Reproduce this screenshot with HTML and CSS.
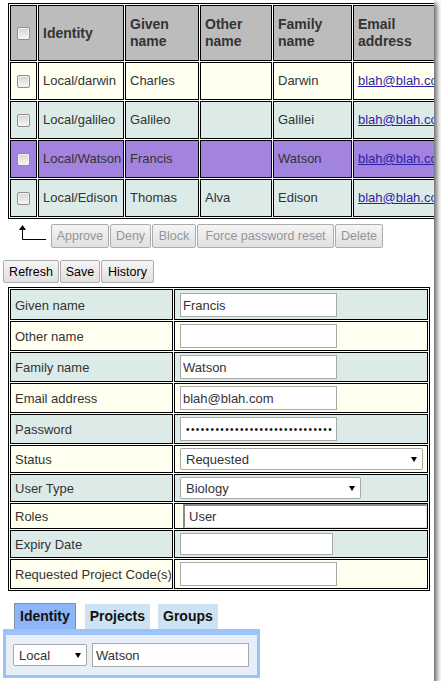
FILE: index.html
```html
<!DOCTYPE html>
<html>
<head>
<meta charset="utf-8">
<link rel="stylesheet" href="styles.css">
</head>
<body>
<div class="window">
  <table class="grid">
    <thead>
      <tr>
        <th class="c-chk"><input type="checkbox" class="chk"></th>
        <th class="c-id">Identity</th>
        <th class="c-given">Given name</th>
        <th class="c-other">Other name</th>
        <th class="c-family">Family name</th>
        <th class="c-email">Email address</th>
      </tr>
    </thead>
    <tbody>
      <tr class="ivory">
        <td><input type="checkbox" class="chk"></td>
        <td>Local/darwin</td><td>Charles</td><td></td><td>Darwin</td>
        <td><a href="#">blah@blah.com</a></td>
      </tr>
      <tr class="teal">
        <td><input type="checkbox" class="chk"></td>
        <td>Local/galileo</td><td>Galileo</td><td></td><td>Galilei</td>
        <td><a href="#">blah@blah.com</a></td>
      </tr>
      <tr class="selected">
        <td><input type="checkbox" class="chk"></td>
        <td>Local/Watson</td><td>Francis</td><td></td><td>Watson</td>
        <td><a href="#">blah@blah.com</a></td>
      </tr>
      <tr class="teal">
        <td><input type="checkbox" class="chk"></td>
        <td>Local/Edison</td><td>Thomas</td><td>Alva</td><td>Edison</td>
        <td><a href="#">blah@blah.com</a></td>
      </tr>
    </tbody>
  </table>

  <div class="actions">
    <svg class="sel-arrow" width="30" height="17" viewBox="0 0 30 17">
      <path d="M5.5 4 V15.5 H29" fill="none" stroke="#000" stroke-width="1"/>
      <path d="M2 6 L5.5 1 L9 6 Z" fill="#000"/>
    </svg>
    <button class="btn act w-approve" disabled>Approve</button>
    <button class="btn act w-deny" disabled>Deny</button>
    <button class="btn act w-block" disabled>Block</button>
    <button class="btn act w-force" disabled>Force password reset</button>
    <button class="btn act w-delete" disabled>Delete</button>
  </div>

  <div class="toolbar">
    <button class="btn tool w-refresh">Refresh</button>
    <button class="btn tool w-save">Save</button>
    <button class="btn tool w-history">History</button>
  </div>

  <table class="form">
    <tr class="teal first">
      <td class="lbl">Given name</td>
      <td class="val"><input class="txt w157" type="text" value="Francis"></td>
    </tr>
    <tr class="ivory">
      <td class="lbl">Other name</td>
      <td class="val"><input class="txt w157" type="text" value=""></td>
    </tr>
    <tr class="teal">
      <td class="lbl">Family name</td>
      <td class="val"><input class="txt w157" type="text" value="Watson"></td>
    </tr>
    <tr class="ivory">
      <td class="lbl">Email address</td>
      <td class="val"><input class="txt w157" type="text" value="blah@blah.com"></td>
    </tr>
    <tr class="teal">
      <td class="lbl">Password</td>
      <td class="val"><input class="txt w157 pw" type="password" value="aaaaaaaaaaaaaaaaaaaaaaaaaaaaaa"></td>
    </tr>
    <tr class="ivory">
      <td class="lbl">Status</td>
      <td class="val"><span class="selwrap w243"><select class="sel"><option>Requested</option></select></span></td>
    </tr>
    <tr class="teal">
      <td class="lbl">User Type</td>
      <td class="val"><span class="selwrap w181"><select class="sel"><option>Biology</option></select></span></td>
    </tr>
    <tr class="ivory">
      <td class="lbl">Roles</td>
      <td class="val roles"><input class="roles-in" type="text" value="User"></td>
    </tr>
    <tr class="teal">
      <td class="lbl">Expiry Date</td>
      <td class="val"><input class="txt w153 short" type="text" value=""></td>
    </tr>
    <tr class="ivory">
      <td class="lbl">Requested Project Code(s)</td>
      <td class="val"><input class="txt w157" type="text" value=""></td>
    </tr>
  </table>

  <div class="tabs">
    <div class="tab active">Identity</div>
    <div class="tab">Projects</div>
    <div class="tab">Groups</div>
  </div>
  <div class="panel">
    <span class="selwrap w74"><select class="sel"><option>Local</option></select></span>
    <input class="txt w157 watson" type="text" value="Watson">
  </div>
</div>
</body>
</html>
```
FILE: styles.css
```css
html, body {
  margin: 0;
  padding: 0;
  background: #ffffff;
}
body {
  font-family: "Liberation Sans", Arial, sans-serif;
  font-size: 13px;
  color: #333;
}
.window {
  width: 434px;
  height: 681px;
  overflow: hidden;
  background: #fff;
  box-shadow: 3px 3px 5px rgba(0, 0, 0, 0.6);
  padding-top: 3px;
  box-sizing: border-box;
}

/* ---------- grid ---------- */
.grid {
  table-layout: fixed;
  width: 447px;
  margin-left: 8px;
  border: 1px solid #000;
  border-collapse: separate;
  border-spacing: 1px;
}
.grid th, .grid td {
  box-sizing: border-box;
  border: 1px solid #000;
  padding: 9px 3px 9px 4px;
  line-height: 18px;
  vertical-align: middle;
  text-align: left;
  white-space: nowrap;
  overflow: hidden;
}
.grid th {
  background: #bcbcbc;
  font-size: 14px;
  font-weight: bold;
  line-height: 17px;
  padding: 10px 3px 10px 4px;
  white-space: normal;
  color: #333;
}
.grid .c-chk { width: 27px; padding: 0; }
.grid .c-id { width: 86px; }
.grid .c-given { width: 74px; }
.grid .c-other { width: 72px; }
.grid .c-family { width: 79px; }
.grid .c-email { width: 100px; }
.grid td:first-child { padding: 0; }
.grid a { color: #2d1fa8; text-decoration: underline; }

.ivory td { background: #fffff0; }
.teal td { background: #ddebe8; }
.selected td { background: #a283df; }

.chk {
  appearance: none;
  -webkit-appearance: none;
  display: block;
  width: 13px;
  height: 13px;
  margin: 0 auto;
  border: 1px solid #8f8f8f;
  border-radius: 2px;
  background: linear-gradient(#d4d4d4, #f6f6f6);
  box-shadow: inset 0 0 0 1px #f2f2f2;
  box-sizing: border-box;
}

/* ---------- buttons ---------- */
.btn {
  font-family: "Liberation Sans", Arial, sans-serif;
  border: 1px solid #acacac;
  border-radius: 2px;
  background: linear-gradient(#f5f5f5, #e0e0e0);
  color: #000;
  padding: 0;
  margin: 0;
  text-align: center;
  white-space: nowrap;
  box-sizing: border-box;
}
.btn:disabled { color: #959595; }

.actions {
  display: flex;
  align-items: flex-start;
  gap: 1px;
  margin: 5px 0 0 17px;
}
.sel-arrow { display: block; margin-right: 3px; flex: none; }
.act { font-size: 12.5px; height: 24px; }
.w-approve { width: 58px; }
.w-deny { width: 41px; }
.w-block { width: 44px; }
.w-force { width: 137px; }
.w-delete { width: 48px; }

.toolbar {
  display: flex;
  gap: 1px;
  margin: 12px 0 0 3px;
}
.tool { font-size: 12.5px; height: 23px; }
.w-refresh { width: 56px; }
.w-save { width: 40px; }
.w-history { width: 53px; }

/* ---------- form ---------- */
.form {
  table-layout: fixed;
  width: 422px;
  margin: 4px 0 0 8px;
  border: 1px solid #000;
  border-collapse: separate;
  border-spacing: 1px;
}
.form td {
  box-sizing: border-box;
  border: 1px solid #000;
  padding: 2px 2px 2px 5px;
  vertical-align: middle;
  white-space: nowrap;
}
.form .lbl { width: 163px; padding-left: 4px; }
.form .val { width: 254px; }
.form .first td { padding-top: 3px; }
.form .roles { padding: 0 0 0 8px; }

.txt {
  display: block;
  box-sizing: border-box;
  height: 24px;
  border: 1px solid #a9a9a9;
  background: #fff;
  padding: 0 2px;
  margin: 0;
  font-family: "Liberation Sans", Arial, sans-serif;
  font-size: 13px;
  color: #333;
  outline: none;
}
.txt.short { height: 22px; }
.pw { letter-spacing: 1.4px; font-size: 10px; padding-left: 5px; color: #111; }
.w157 { width: 157px; }
.w153 { width: 153px; }

.roles-in {
  display: block;
  box-sizing: border-box;
  width: 244px;
  height: 24px;
  margin: 0;
  border-style: solid;
  border-width: 2px 1px 1px 2px;
  border-color: #8a8a8a #e2e2e2 #e2e2e2 #8a8a8a;
  background: #fff;
  padding: 0 4px;
  font-family: "Liberation Sans", Arial, sans-serif;
  font-size: 13px;
  color: #333;
  outline: none;
}

.selwrap {
  position: relative;
  display: block;
}
.selwrap::after {
  content: "";
  position: absolute;
  right: 6px;
  top: 9px;
  border-left: 3px solid transparent;
  border-right: 3px solid transparent;
  border-top: 5px solid #000;
}
.sel {
  appearance: none;
  -webkit-appearance: none;
  display: block;
  width: 100%;
  height: 22px;
  box-sizing: border-box;
  border: 1px solid #a9a9a9;
  border-radius: 2px;
  background: #fff;
  padding: 0 0 0 5px;
  margin: 0;
  font-family: "Liberation Sans", Arial, sans-serif;
  font-size: 13px;
  color: #333;
  outline: none;
}
.w243 { width: 243px; }
.w181 { width: 181px; }
.w74 { width: 74px; }

/* ---------- tabs ---------- */
.tabs {
  display: flex;
  align-items: flex-end;
  gap: 8px;
  margin: 12px 0 0 14px;
  height: 26px;
}
.tab {
  height: 25px;
  line-height: 25px;
  padding: 0 5px;
  background: #cde2f3;
  font-size: 14px;
  font-weight: bold;
  color: #111;
}
.tab.active {
  height: 25px;
  background: #8db5f8;
  border: 1px solid #7f8fa8;
  border-bottom: none;
  margin-right: 1px;
}
.panel {
  display: flex;
  align-items: center;
  gap: 5px;
  width: 257px;
  height: 49px;
  margin-left: 3px;
  box-sizing: border-box;
  border: 3px solid #9cc3f7;
  border-top-width: 6px;
  background: #e8eef8;
  padding: 0 0 0 7px;
}
.panel .watson { width: 157px; height: 24px; padding-left: 3px; }
```
